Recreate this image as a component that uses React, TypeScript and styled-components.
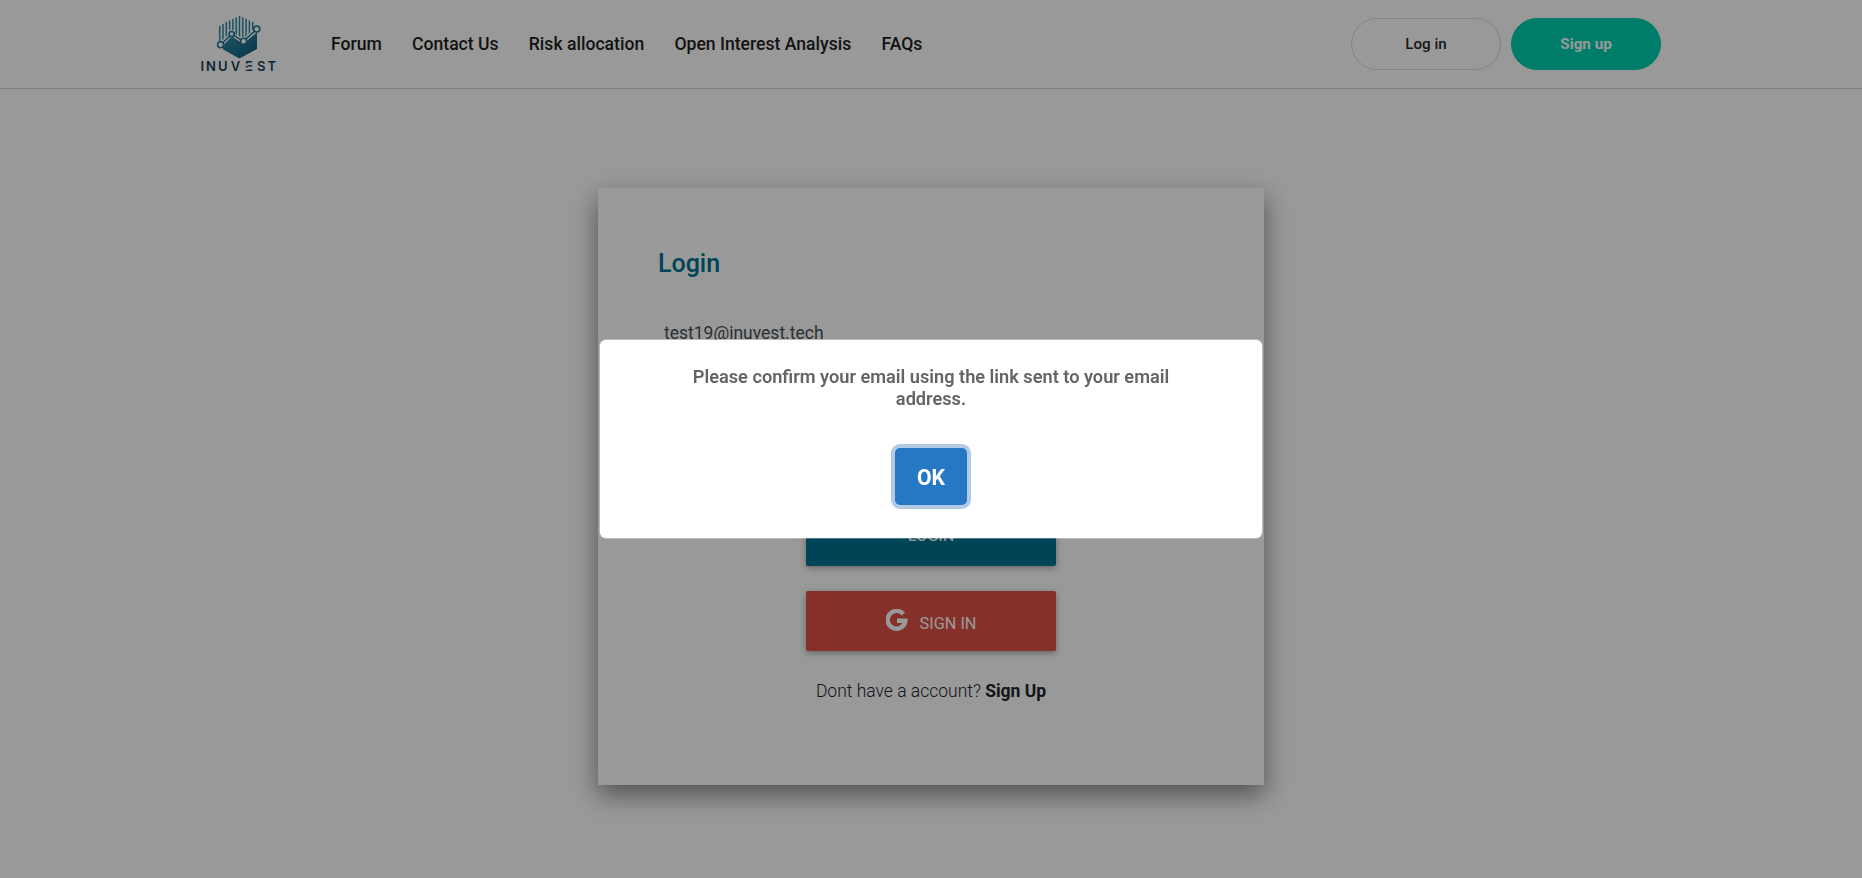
import React from 'react';
import styled, { createGlobalStyle } from 'styled-components';

const GlobalStyle = createGlobalStyle`
  *, *::before, *::after { box-sizing: border-box; }
  body {
    margin: 0;
    background: #fff;
    color: #212529;
    font-family: Roboto, "Liberation Sans", sans-serif;
    overflow: hidden;
  }
`;

const Page = styled.div`
  height: 100vh;
  display: flex;
  flex-direction: column;
`;

const Header = styled.header`
  height: 89px;
  flex: none;
  display: flex;
  align-items: center;
  padding: 0 201px 0 198px;
  border-bottom: 1px solid #d2d2d2;
`;

const LogoLink = styled.a`
  display: flex;
  width: 80px;
  margin-right: 53px;
`;

const Nav = styled.nav`
  display: flex;
  gap: 30.2px;
`;

const NavLink = styled.a`
  font-size: 17.6px;
  line-height: 24px;
  font-weight: 500;
  color: #1e1e1e;
  white-space: nowrap;
`;

const HeaderActions = styled.div`
  display: flex;
  gap: 10px;
  margin-left: auto;
`;

const PillButton = styled.button<{ $filled?: boolean }>`
  width: 150px;
  height: 52px;
  padding: 0;
  border-radius: 26px;
  border: 1px solid ${(p) => (p.$filled ? '#00d0ad' : '#dcdcdc')};
  background: ${(p) => (p.$filled ? '#00d0ad' : 'transparent')};
  color: ${(p) => (p.$filled ? '#fff' : '#2a2a2a')};
  font: ${(p) => (p.$filled ? 700 : 500)} 15.2px Roboto, sans-serif;
`;

const Main = styled.main`
  flex: 1;
  display: flex;
  justify-content: center;
  align-items: flex-start;
  padding-top: 99px;
`;

const Card = styled.section`
  width: 666px;
  height: 597px;
  padding: 60px;
  display: flex;
  flex-direction: column;
  align-items: center;
  background: #fff;
  box-shadow: 0 10px 24px rgba(14, 0, 4, 0.48);
`;

const CardTitle = styled.h1`
  margin: 0;
  align-self: stretch;
  font-size: 25px;
  line-height: 31px;
  font-weight: 500;
  color: #007293;
`;

const Field = styled.input`
  width: 100%;
  height: 48px;
  padding: 0 6px;
  border: 0;
  border-bottom: 1px solid #ced4da;
  outline: none;
  font: 400 17.5px Roboto, sans-serif;
  color: #495057;

  ${CardTitle} + & {
    margin-top: 30px;
  }
  & + & {
    margin-top: 20px;
  }
`;

const ActionButton = styled.button<{ $tone: string; $top: number }>`
  width: 250px;
  height: 60px;
  flex: none;
  margin-top: ${(p) => p.$top}px;
  padding: 0 0 1px;
  display: flex;
  align-items: center;
  justify-content: center;
  gap: 12px;
  border: 0;
  border-radius: 2px;
  background: ${(p) => p.$tone};
  color: #fff;
  font: 400 16.3px Roboto, sans-serif;
  box-shadow: 0 2px 5px rgba(0, 0, 0, 0.2), 0 2px 10px rgba(0, 0, 0, 0.16);
`;

const GoogleMark = styled.svg`
  width: 22px;
  height: 22px;
  margin-bottom: 1px;
`;

const ButtonLabel = styled.span`
  padding-top: 5px;
`;

const SignupHint = styled.p`
  margin: 29px 0 0;
  font-size: 17.5px;
  line-height: 22px;
  font-weight: 300;
  color: #212529;
`;

const SignupLink = styled.a`
  font-weight: 700;
`;

const Backdrop = styled.div`
  position: fixed;
  inset: 0;
  display: flex;
  align-items: center;
  justify-content: center;
  background: rgba(0, 0, 0, 0.4);
`;

const Dialog = styled.div`
  width: 662px;
  height: 198px;
  padding-top: 26px;
  display: flex;
  flex-direction: column;
  align-items: center;
  border-radius: 6px;
  background: #fff;
  box-shadow: 0 0 0 1px rgba(255, 255, 255, 0.3);
`;

const DialogTitle = styled.h2`
  margin: 0;
  width: 530px;
  text-align: center;
  font-size: 18.2px;
  line-height: 22px;
  font-weight: 600;
  color: #646464;
`;

const ConfirmButton = styled.button`
  width: 72px;
  height: 57px;
  margin-top: 38px;
  padding: 1px 0 0;
  border: 0;
  border-radius: 5px;
  background: #2778c4;
  color: #fff;
  font: 700 21.2px Roboto, sans-serif;
  box-shadow: 0 0 0 4px #b2cae4;
`;

const BARS = [
  [21.7, 26, 41],
  [25, 24, 41],
  [28.3, 22, 38],
  [31.6, 20.5, 30],
  [34.9, 18.8, 30],
  [38.2, 17.4, 36],
  [41.5, 16, 38],
  [44.8, 17.4, 37],
  [48.1, 18.8, 38],
  [51.4, 20.5, 35],
  [54.7, 22, 30],
];

function Logo() {
  return (
    <svg width="80" height="88" viewBox="0 0 80 88" aria-label="INUVEST">
      <defs>
        <linearGradient id="logo" x1="0" y1="0" x2="1" y2="1">
          <stop offset="0" stopColor="#3191ab" />
          <stop offset="1" stopColor="#0f5577" />
        </linearGradient>
      </defs>
      <path d="M25 43 34 36.5 45 43.5 59 32.5V49L41.5 58.5 25 49.5Z" fill="url(#logo)" />
      <g stroke="#2a87a3" strokeWidth="1.5">
        {BARS.map(([x, y1, y2]) => (
          <line key={x} x1={x} x2={x} y1={y1} y2={y2} />
        ))}
      </g>
      <path d="M22.6 44.7 33.7 34.1 45.6 41.3 58.8 29" fill="none" stroke="#fff" strokeWidth="4" />
      <path d="M22.6 44.7 33.7 34.1 45.6 41.3 58.8 29" fill="none" stroke="#1d7391" strokeWidth="1.5" />
      <g fill="#fff" stroke="#1d7391" strokeWidth="1.6">
        <circle cx="22.6" cy="44.7" r="3" />
        <circle cx="33.7" cy="34.1" r="2.6" />
        <circle cx="45.6" cy="41.3" r="3" />
        <circle cx="58.8" cy="29" r="3" />
      </g>
      <text
        x="2.4 7.9 19.9 32.8 46.9 59 69.6"
        y="71.4"
        fill="#1c3f58"
        fontFamily="Inter, sans-serif"
        fontSize="13"
        fontWeight="600"
      >
        INUVEST
      </text>
      <path d="M47.4 63.6h3v2.2h-3zM47.4 67.6h3v2.1h-3z" fill="#fff" />
    </svg>
  );
}

const LINKS = ['Forum', 'Contact Us', 'Risk allocation', 'Open Interest Analysis', 'FAQs'];

export default function App() {
  return (
    <>
      <GlobalStyle />
      <Page>
        <Header>
          <LogoLink>
            <Logo />
          </LogoLink>
          <Nav>
            {LINKS.map((label) => (
              <NavLink key={label}>{label}</NavLink>
            ))}
          </Nav>
          <HeaderActions>
            <PillButton>Log in</PillButton>
            <PillButton $filled>Sign up</PillButton>
          </HeaderActions>
        </Header>
        <Main>
          <Card>
            <CardTitle>Login</CardTitle>
            <Field defaultValue="test19@inuvest.tech" />
            <Field type="password" />
            <ActionButton $tone="#007293" $top={81}>
              LOGIN
            </ActionButton>
            <ActionButton $tone="#df5046" $top={25}>
              <GoogleMark viewBox="0 0 22 22">
                <path
                  d="M17.4 5.1A8.9 8.9 0 1 0 19.4 11.8H11"
                  fill="none"
                  stroke="#fff"
                  strokeWidth="4.4"
                />
              </GoogleMark>
              <ButtonLabel>SIGN IN</ButtonLabel>
            </ActionButton>
            <SignupHint>
              Dont have a account? <SignupLink>Sign Up</SignupLink>
            </SignupHint>
          </Card>
        </Main>
      </Page>
      <Backdrop>
        <Dialog role="dialog">
          <DialogTitle>Please confirm your email using the link sent to your email address.</DialogTitle>
          <ConfirmButton>OK</ConfirmButton>
        </Dialog>
      </Backdrop>
    </>
  );
}
